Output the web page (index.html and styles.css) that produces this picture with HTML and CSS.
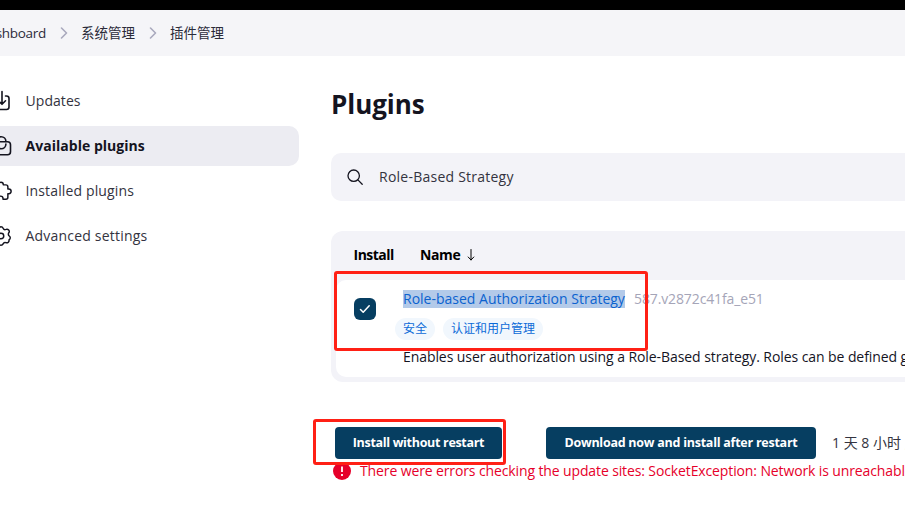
FILE: index.html
```html
<!DOCTYPE html>
<html lang="zh-CN">
<head>
<meta charset="utf-8">
<title>Plugins</title>
<link rel="stylesheet" href="styles.css">
</head>
<body>
<div class="topbar"></div>
<nav class="breadcrumbs">
  <span class="crumb crumb-first">Dashboard</span>
  <svg class="chevron" viewBox="0 0 8 12"><path d="M1.500 1 6.500 6l-5 5"/></svg>
  <span class="crumb">系统管理</span>
  <svg class="chevron" viewBox="0 0 8 12"><path d="M1.500 1 6.500 6l-5 5"/></svg>
  <span class="crumb">插件管理</span>
</nav>
<div class="page">
  <aside class="sidebar">
    <a class="task">
      <svg class="task-icon" viewBox="0 0 22 22"><path d="M7 6H4.500A2.500 2.500 0 0 0 2 8.500V17a2.500 2.500 0 0 0 2.500 2.500h12A2.500 2.500 0 0 0 19 17V8.500A2.500 2.500 0 0 0 16.500 6H15.500M12 1.500V14M8.500 10.800l3.500 3.500 3.500-3.500"/></svg>
      <span class="t-updates">Updates</span>
    </a>
    <a class="task task-active">
      <svg class="task-icon" viewBox="0 0 22 22"><rect x="1.500" y="6.700" width="19" height="13" rx="3"/><path d="M6.500 6.500a4.700 4.700 0 0 1 9.400 0M6.500 9a4.700 4.700 0 0 0 9.400 0"/></svg>
      <span class="t-available">Available plugins</span>
    </a>
    <a class="task">
      <svg class="task-icon" viewBox="0 0 24 24"><path d="M19.500 9.800V7.500a2.200 2.200 0 0 0-2.200-2.200H14.500V5a2.500 2.500 0 0 0-5 0v.3H6a2.200 2.200 0 0 0-2.200 2.200V10H5a2.500 2.500 0 0 1 0 5H3.800v3.800A2.200 2.200 0 0 0 6 21h3v-.8a2.600 2.600 0 0 1 5.200 0v.8h3.100a2.200 2.200 0 0 0 2.200-2.200v-3.900h1a2.500 2.500 0 0 0 0-5.100z"/></svg>
      <span class="t-installed">Installed plugins</span>
    </a>
    <a class="task">
      <svg class="task-icon" viewBox="0 0 24 24"><circle cx="12" cy="12" r="3"/><path d="M9.700 3.500a2.500 2.500 0 0 1 4.600 0 2.500 2.500 0 0 0 3.200 1.300 2.500 2.500 0 0 1 3.200 3.500 2.500 2.500 0 0 0 .3 3.700 2.500 2.500 0 0 1-.3 4.300 2.500 2.500 0 0 1-3.200 3 2.500 2.500 0 0 0-3.200 1.300 2.500 2.500 0 0 1-4.600 0 2.500 2.500 0 0 0-3.200-1.300 2.500 2.500 0 0 1-3.200-3.500 2.500 2.500 0 0 0 0-3.800 2.500 2.500 0 0 1 0-3.700 2.500 2.500 0 0 1 3.200-3.500 2.500 2.500 0 0 0 3.200-1.300z"/></svg>
      <span class="t-advanced">Advanced settings</span>
    </a>
  </aside>
  <main class="content">
    <h1>Plugins</h1>
    <div class="search">
      <svg class="search-icon" viewBox="0 0 16 16"><circle cx="6.700" cy="6.700" r="5.700"/><path d="m10.900 10.900 4.300 4.300"/></svg>
      <span class="query">Role-Based Strategy</span>
    </div>
    <section class="table">
      <header class="table-head">
        <span class="col-install">Install</span>
        <span class="col-name">Name</span>
        <svg class="sort" viewBox="0 0 8 12"><path d="M4 .5v10.500M1.200 8 4 11 6.800 8"/></svg>
      </header>
      <div class="row">
        <span class="checkbox"><svg viewBox="0 0 12 10"><path d="m1.500 5.500 2.700 2.700 6-6.500"/></svg></span>
        <div class="details">
          <div class="title-line"><a class="plugin-link">Role-based Authorization Strategy</a><span class="version">587.v2872c41fa_e51</span></div>
          <div class="tags"><span class="tag">安全</span><span class="tag">认证和用户管理</span></div>
          <div class="excerpt">Enables user authorization using a Role-Based strategy. Roles can be defined globally</div>
        </div>
        <div class="mark mark-row"></div>
      </div>
    </section>
    <div class="actions">
      <button class="btn btn-install">Install without restart</button>
      <button class="btn btn-download">Download now and install after restart</button>
      <span class="age">1 天 8 小时 之前</span>
      <div class="mark mark-button"></div>
    </div>
    <div class="error">
      <svg class="error-icon" viewBox="0 0 18 18"><circle cx="9" cy="9" r="9"/><path d="M9 4.500v5.500M9 12v2"/></svg>
      <span class="error-text">There were errors checking the update sites: SocketException: Network is unreachable</span>
    </div>
  </main>
</div>
</body>
</html>
```
FILE: styles.css
```css
* { box-sizing: border-box; }
body {
  margin: 0;
  width: 905px;
  height: 517px;
  overflow: hidden;
  background: #fff;
  color: #14141f;
  font: 14px/20px "Open Sans", "Noto Sans CJK SC", sans-serif;
  white-space: nowrap;
}
svg { flex: none; fill: none; stroke: currentColor; stroke-linecap: round; stroke-linejoin: round; }
.topbar { height: 10px; background: #000; }
.breadcrumbs { display: flex; align-items: center; height: 46px; background: #f5f5f8; font-size: 13.5px; color: #2b2b38; }
.crumb-first { width: 46px; display: flex; justify-content: flex-end; letter-spacing: -.3px; }
.chevron { width: 8px; height: 12px; margin: 0 13px 0 14px; color: #a9a9bd; stroke-width: 1.6; }
.page { display: flex; width: 905px; overflow: hidden; }
.sidebar { width: 299px; flex: none; padding-top: 25px; display: flex; flex-direction: column; gap: 5px; }
.task { display: flex; align-items: center; height: 40px; gap: 13.5px; color: #333340; border-radius: 0 10px 10px 0; }
.task-icon { width: 22px; height: 22px; margin-left: -10px; stroke-width: 1.6; color: #14141f; }
.task-active { background: #ececf2; color: #14141f; font-weight: 700; }
.t-updates { letter-spacing: .06px; }
.t-available { letter-spacing: .03px; }
.t-installed { letter-spacing: .14px; }
.t-advanced { letter-spacing: .2px; }
.content { flex: none; width: 640px; height: 461px; margin-left: 32px; padding-top: 30px; }
h1 { margin: 0; font-size: 26px; line-height: 36px; height: 36px; font-weight: 700; letter-spacing: -.05px; }
.search { display: flex; align-items: center; height: 48px; margin-top: 31px; padding-left: 16px; gap: 16px; background: #f3f3f8; border-radius: 10px; color: #333340; }
.search-icon { width: 16px; height: 16px; stroke-width: 1.3; color: #14141f; }
.query { letter-spacing: .24px; }
.table { margin-top: 30px; padding: 0 5px 5px; height: 151px; background: #f3f3f8; border-radius: 12px; color: #14141f; }
.table-head { display: flex; align-items: center; height: 49px; padding: 0 0 2px 17.5px; font-weight: 700; color: #000; }
.col-install { width: 66.5px; letter-spacing: -.5px; }
.col-name { letter-spacing: -.4px; }
.sort { width: 8px; height: 12px; margin-left: 6.5px; }
.row { position: relative; display: flex; height: 97px; background: #fff; border-radius: 10px; }
.checkbox { flex: none; display: flex; align-items: center; justify-content: center; width: 22px; height: 22px; margin: 18px 0 0 18px; border-radius: 6px; background: #063e61; color: #fff; }
.checkbox svg { width: 12px; height: 10px; stroke-width: 1.5; }
.details { margin-left: 27px; padding-top: 10px; }
.title-line { display: flex; gap: 9px; height: 18px; line-height: 18px; }
.plugin-link { width: 222px; background: #b3cae9; color: #0b62cf; }
.version { color: #a5a5b8; letter-spacing: -.12px; }
.tags { display: flex; gap: 8px; margin: 10px 0 0 -8px; }
.tag { height: 22px; padding: 0 8px; border-radius: 11px; background: #f1f7fd; color: #0b6ad8; font-size: 12px; line-height: 22px; }
.excerpt { margin-top: 7px; color: #14141f; letter-spacing: -.075px; }
.mark { position: absolute; border: 3px solid #ff2015; border-radius: 3px; }
.mark-row { left: -2px; top: -9px; width: 314px; height: 80px; }
.mark-button { left: -18px; top: -8px; width: 193px; height: 46px; }
.actions { position: relative; z-index: 1; display: flex; align-items: center; height: 32px; margin-top: 45px; padding-left: 4px; }
.btn { height: 32px; padding: 0; border: 0; border-radius: 4px; background: #063e61; color: #fff; font: 700 12.5px/20px "Open Sans", sans-serif; letter-spacing: -.25px; }
.btn-install { width: 167px; letter-spacing: -.31px; }
.btn-download { width: 270px; margin-left: 44px; }
.age { margin-left: 16px; color: #333340; }
.error { display: flex; align-items: center; height: 22px; margin-top: 1px; padding-left: 2px; gap: 9px; color: #e6002a; }
.error-text { letter-spacing: -.12px; }
.error-icon { width: 18px; height: 18px; }
.error-icon circle { fill: #e6002a; stroke: none; }
.error-icon path { stroke: #fff; stroke-width: 1.8; stroke-linecap: butt; }
```
